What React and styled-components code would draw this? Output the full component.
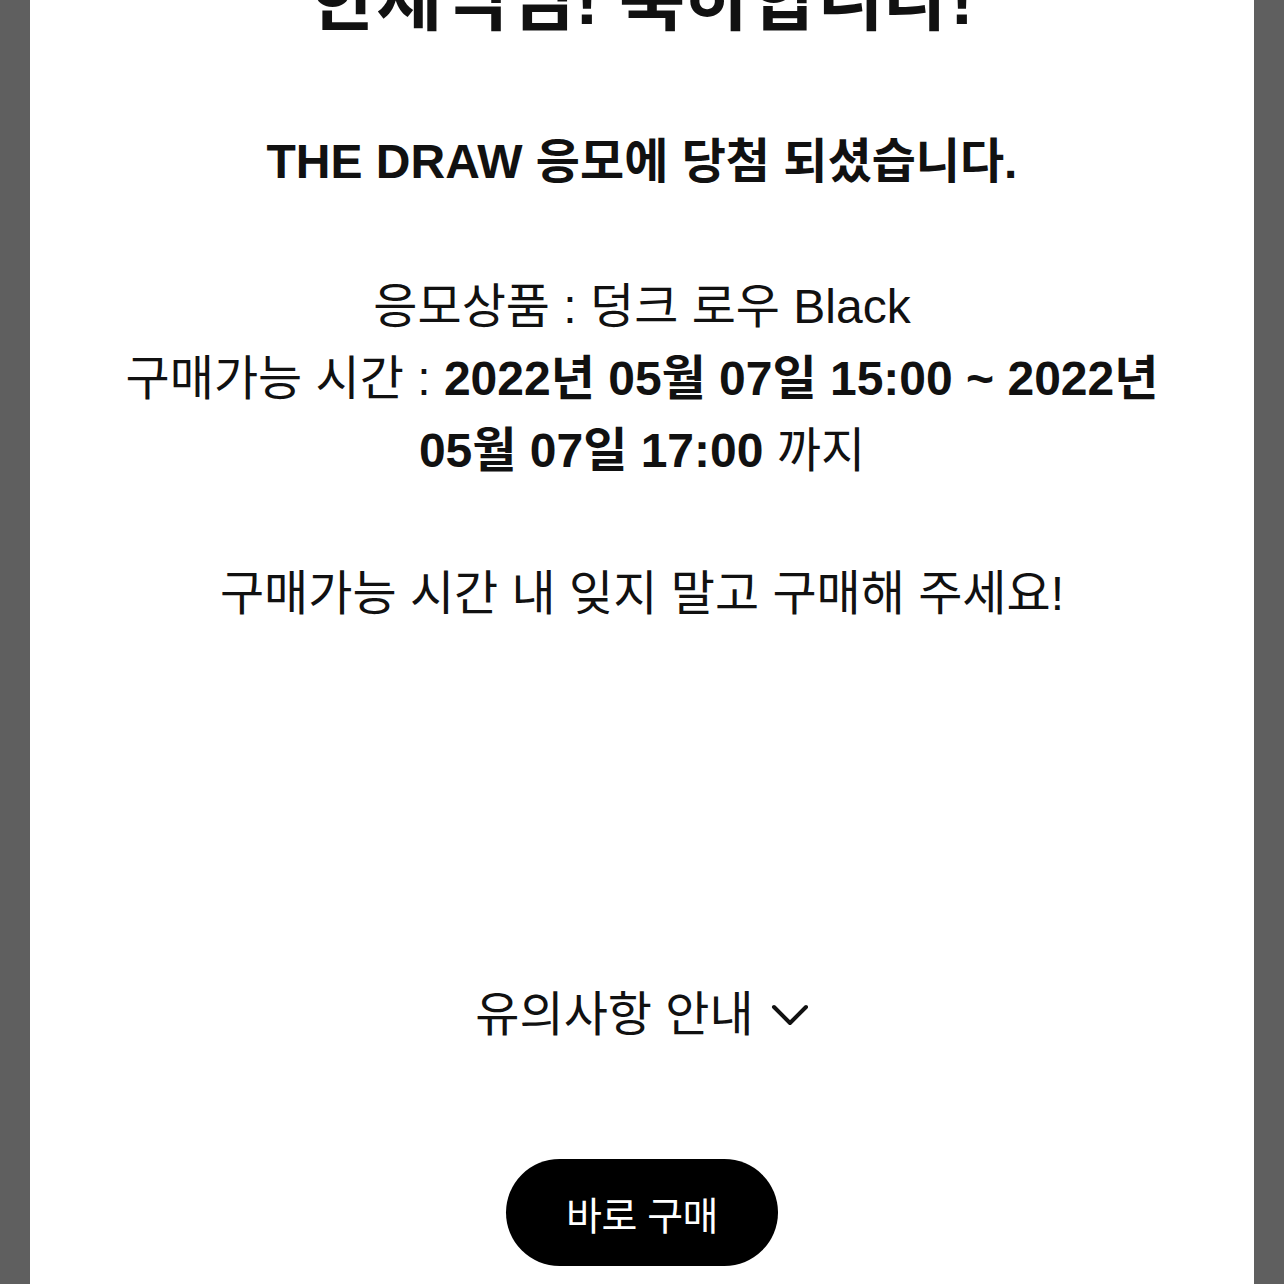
import React from "react";
import styled, { createGlobalStyle } from "styled-components";

const Global = createGlobalStyle`
  html, body { margin: 0; padding: 0; background: #5f5f5f; }
  body {
    font-family: "Liberation Sans", "Noto Sans CJK KR", sans-serif;
    color: #111;
    overflow: hidden;
  }
`;

const Panel = styled.main`
  margin: 0 30px;
  min-height: 1284px;
  background: #fff;
  display: flex;
  flex-direction: column;
  align-items: center;
  text-align: center;
  overflow: hidden;
`;

const Heading = styled.h1`
  margin: -55px 0 0;
  font-size: 72px;
  line-height: 108px;
  font-weight: 700;
  white-space: nowrap;
`;

const Notice = styled.p`
  margin: ${(p) => p.$top}px 0 0;
  font-size: 48px;
  line-height: 72px;
  font-weight: ${(p) => (p.$bold ? 700 : 400)};
  white-space: nowrap;
`;

const Strong = styled.b`
  font-weight: 700;
`;

const Toggle = styled.button`
  margin-top: 349px;
  display: flex;
  align-items: center;
  gap: 17px;
  border: 0;
  background: none;
  padding: 0;
  font-family: inherit;
  font-size: 48px;
  line-height: 72px;
  color: #111;
  cursor: pointer;
`;

const BuyButton = styled.button`
  margin-top: 108px;
  width: 272px;
  height: 107px;
  border: 0;
  border-radius: 54px;
  background: #000;
  color: #fff;
  font-family: inherit;
  font-size: 39px;
  letter-spacing: -0.5px;
  cursor: pointer;
`;

export default function App() {
  return (
    <>
      <Global />
      <Panel>
        <Heading>한제익님! 축하합니다!</Heading>
        <Notice $top={73} $bold>
          THE DRAW 응모에 당첨 되셨습니다.
        </Notice>
        <Notice $top={73}>
          응모상품 : 덩크 로우 Black
          <br />
          구매가능 시간 : <Strong>2022년 05월 07일 15:00 ~ 2022년</Strong>
          <br />
          <Strong>05월 07일 17:00</Strong> 까지
        </Notice>
        <Notice $top={71}>구매가능 시간 내 잊지 말고 구매해 주세요!</Notice>
        <Toggle>
          유의사항 안내
          <svg width="38" height="26" viewBox="0 0 38 26" fill="none">
            <polyline
              points="3,5 19,21 35,5"
              stroke="#111"
              strokeWidth="4"
              strokeLinecap="round"
              strokeLinejoin="round"
            />
          </svg>
        </Toggle>
        <BuyButton>바로 구매</BuyButton>
      </Panel>
    </>
  );
}
